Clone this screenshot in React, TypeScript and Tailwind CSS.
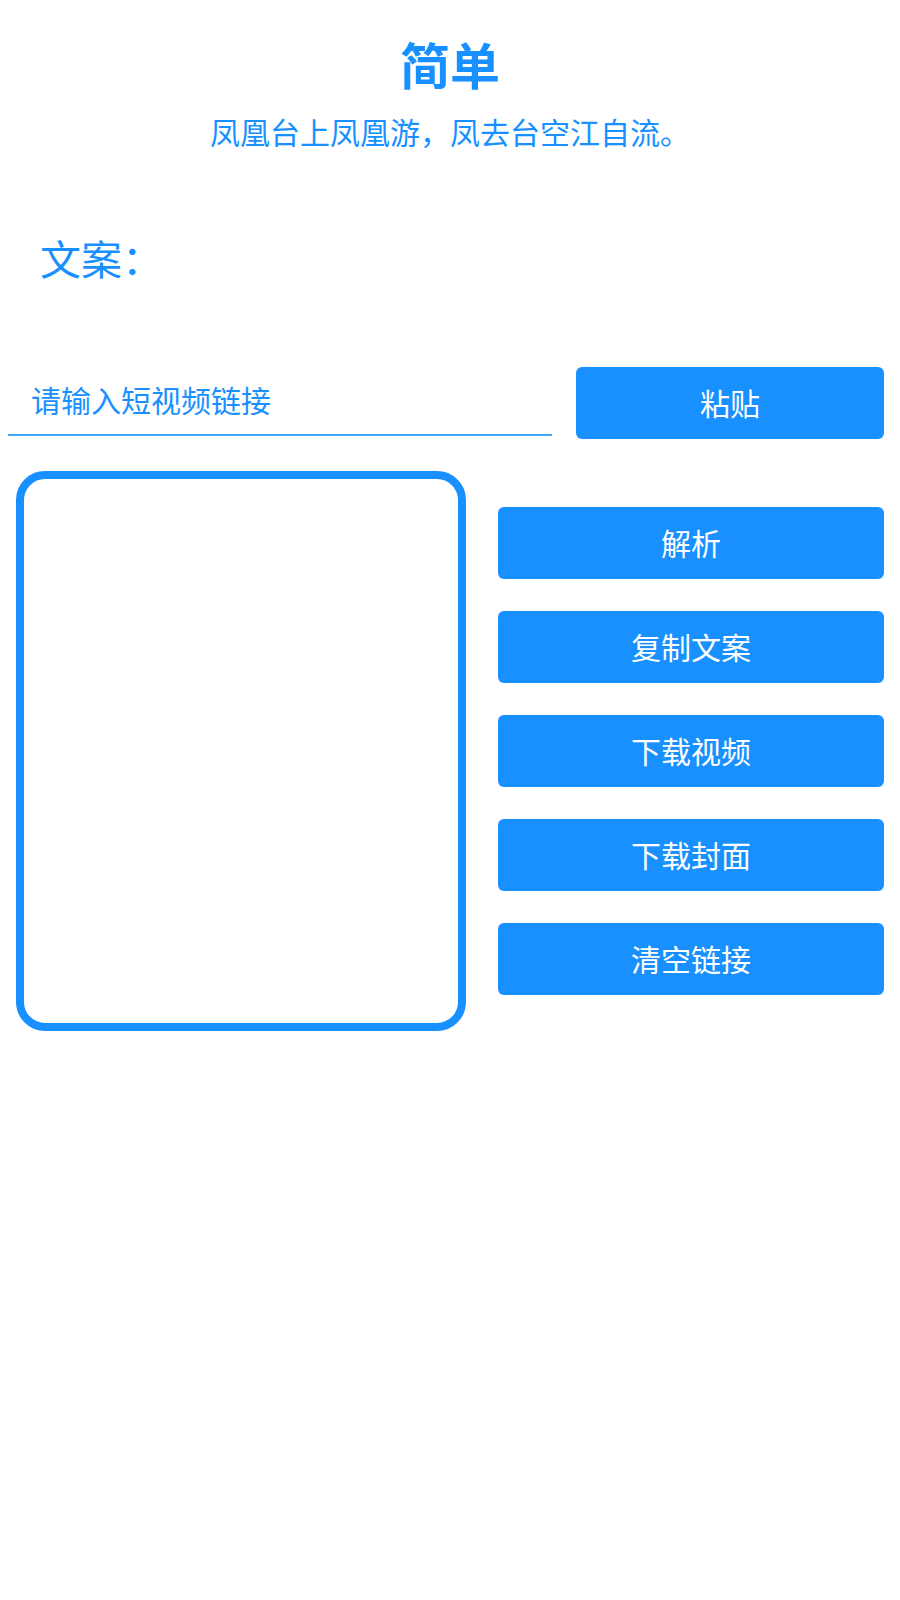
import {FC} from 'react';

const actions = ['解析', '复制文案', '下载视频', '下载封面', '清空链接'];

const ActionButton: FC<{label: string; className?: string}> = ({label, className}) => (
  <button
    type="button"
    className={`h-[72px] rounded-md bg-[#1890ff] pb-[3px] text-[30px] leading-none text-white ${className ?? ''}`}
  >
    {label}
  </button>
);

const App: FC = () => {
  return (
    <div
      className="min-h-[1600px] w-full bg-white text-[#1890ff]"
      style={{fontFamily: '"Noto Sans CJK SC", "Noto Sans", sans-serif'}}
    >
      <h1 className="pt-[33px] text-center text-[50px] font-bold leading-[60px]">简单</h1>
      <p className="mt-[18px] text-center text-[30px] leading-[40px]">凤凰台上凤凰游，凤去台空江自流。</p>

      <div className="mt-[81px] pl-[40px] text-[41px] leading-[50px]">文案：</div>

      <div className="mt-[85px] flex items-start gap-[24px] pl-[8px] pr-[16px]">
        <input
          type="text"
          placeholder="请输入短视频链接"
          className="h-[69px] w-[544px] border-b-2 border-[#40a9ff] bg-transparent pb-[4px] pl-[23px] text-[30px] text-[#1890ff] outline-none placeholder:text-[#1890ff]"
        />
        <ActionButton label="粘贴" className="flex-1" />
      </div>

      <div className="mt-[32px] flex items-start gap-[32px] pl-[16px] pr-[16px]">
        <div className="h-[560px] w-[450px] shrink-0 rounded-[29px] border-[8px] border-[#1890ff]" />
        <div className="flex flex-1 flex-col gap-[32px] pt-[36px]">
          {actions.map((a) => (
            <ActionButton key={a} label={a} />
          ))}
        </div>
      </div>
    </div>
  );
};

export default App;
